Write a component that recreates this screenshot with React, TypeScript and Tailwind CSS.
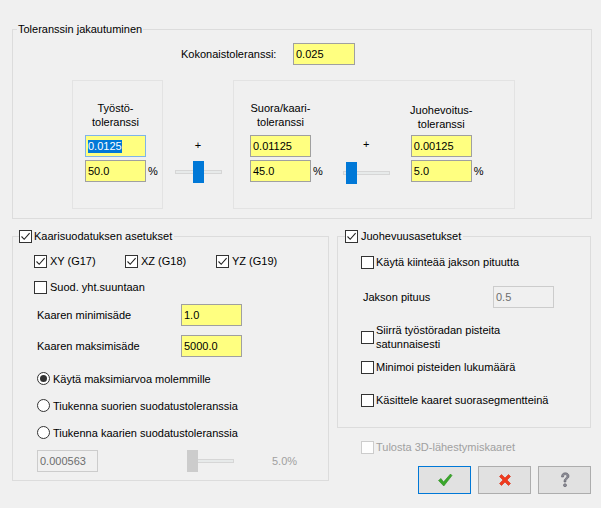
import React from "react";

function Field({ value, focused = false, disabled = false, w = "w-[61px]" }: { value: string; focused?: boolean; disabled?: boolean; w?: string }) {
  const base = "h-[22px] flex items-center pl-[2px] leading-[13px] shrink-0 " + w + " ";
  if (disabled) {
    return <div className={base + "border border-[#cccccc] bg-[#f0f0f0] text-[#6d6d6d]"}>{value}</div>;
  }
  if (focused) {
    return (
      <div className={base + "border border-[#7eb4ea] bg-[#ffff80]"}>
        <span className="bg-[#0078d7] text-white">{value}</span>
      </div>
    );
  }
  return <div className={base + "border border-[#a0a0a0] bg-[#ffff80] text-black"}>{value}</div>;
}

function Check({ checked = false, disabled = false }: { checked?: boolean; disabled?: boolean }) {
  return (
    <span
      className={
        "w-[13px] h-[13px] shrink-0 border flex items-center justify-center " +
        (disabled ? "border-[#cccccc] bg-[#fdfdfd]" : "border-[#333333] bg-white")
      }
    >
      {checked && (
        <svg width="11" height="11" viewBox="0 0 11 11">
          <path d="M1.5 5.5 L4.2 8.3 L9.6 2.2" fill="none" stroke="#222" strokeWidth="1.1" />
        </svg>
      )}
    </span>
  );
}

function Radio({ checked = false }: { checked?: boolean }) {
  return (
    <span className="w-[13px] h-[13px] shrink-0 rounded-full border border-[#333333] bg-white flex items-center justify-center">
      {checked && <span className="w-[7px] h-[7px] rounded-full bg-[#333333]" />}
    </span>
  );
}

function Slider({ thumbLeft, disabled = false }: { thumbLeft: number; disabled?: boolean }) {
  return (
    <div className="relative w-[47px] h-[22px] shrink-0">
      <div className="absolute left-0 right-0 top-[9px] h-[4px] bg-[#e7eaea] border border-[#d6d6d6]" />
      <div
        className={"absolute top-0 w-[11px] h-[22px] " + (disabled ? "bg-[#cccccc]" : "bg-[#0078d7]")}
        style={{ left: thumbLeft }}
      />
    </div>
  );
}

export default function App() {
  return (
    <div className="w-[601px] h-[508px] bg-[#f0f0f0] pt-[22px] pl-[12px] pr-[10px] text-[11px] leading-[14px] text-black font-['Liberation_Sans',Arial,sans-serif] overflow-hidden">
      {/* Toleranssin jakautuminen */}
      <fieldset className="w-[580px] h-[197px] shrink-0 border border-[#dcdcdc]">
        <legend className="ml-[4px] px-[1px] leading-[14px]">Toleranssin jakautuminen</legend>
        <div className="flex items-center mt-[7px]">
          <div className="ml-[168px] w-[112px]">Kokonaistoleranssi:</div>
          <Field value="0.025" w="w-[62px]" />
        </div>
        <div className="flex mt-[15px] ml-[59px]">
          {/* Box 1 */}
          <div className="w-[91px] h-[129px] border border-[#e3e3e3] flex flex-col pl-[12px]">
            <div className="h-[54px] w-[61px] pt-[20px] flex flex-col items-center whitespace-nowrap">
              <span>Työstö-</span>
              <span>toleranssi</span>
            </div>
            <Field value="0.0125" focused />
            <div className="flex items-center mt-[3px]">
              <Field value="50.0" />
              <span className="ml-[2px]">%</span>
            </div>
          </div>
          {/* Slider 1 */}
          <div className="w-[70px] flex flex-col items-center pt-[58px]">
            <span>+</span>
            <div className="mt-[9px]">
              <Slider thumbLeft={18} />
            </div>
          </div>
          {/* Box 2 */}
          <div className="w-[282px] h-[129px] border border-[#e3e3e3] flex pl-[16px]">
            <div className="flex flex-col">
              <div className="h-[54px] w-[61px] pt-[20px] flex flex-col items-center whitespace-nowrap">
                <span>Suora/kaari-</span>
                <span>toleranssi</span>
              </div>
              <Field value="0.01125" />
              <div className="flex items-center mt-[3px]">
                <Field value="45.0" />
                <span className="ml-[2px]">%</span>
              </div>
            </div>
            <div className="ml-[20px] w-[47px] flex flex-col items-center pt-[56px]">
              <span>+</span>
              <div className="mt-[11px]">
                <Slider thumbLeft={3} />
              </div>
            </div>
            <div className="ml-[21px] flex flex-col">
              <div className="h-[54px] w-[61px] pt-[22px] flex flex-col items-center whitespace-nowrap">
                <span>Juohevoitus-</span>
                <span>toleranssi</span>
              </div>
              <Field value="0.00125" />
              <div className="flex items-center mt-[3px]">
                <Field value="5.0" />
                <span className="ml-[2px]">%</span>
              </div>
            </div>
          </div>
        </div>
      </fieldset>

      <div className="flex mt-[10px]">
        {/* Kaarisuodatuksen asetukset */}
        <fieldset className="w-[317px] h-[252px] shrink-0 border border-[#dcdcdc]">
          <legend className="ml-[6px] pr-[2px]">
            <span className="flex items-center gap-[2px] h-[14px]">
              <Check checked />
              <span>Kaarisuodatuksen asetukset</span>
            </span>
          </legend>
          <div className="flex mt-[11px] pl-[21px]">
            <div className="w-[91px] flex items-center gap-[3px]">
              <Check checked />
              <span>XY (G17)</span>
            </div>
            <div className="w-[91px] flex items-center gap-[3px]">
              <Check checked />
              <span>XZ (G18)</span>
            </div>
            <div className="flex items-center gap-[3px]">
              <Check checked />
              <span>YZ (G19)</span>
            </div>
          </div>
          <div className="flex items-center gap-[3px] mt-[12px] pl-[21px]">
            <Check />
            <span>Suod. yht.suuntaan</span>
          </div>
          <div className="flex items-center mt-[10px] pl-[24px]">
            <span className="w-[144px]">Kaaren minimisäde</span>
            <Field value="1.0" />
          </div>
          <div className="flex items-center mt-[9px] pl-[24px]">
            <span className="w-[144px]">Kaaren maksimisäde</span>
            <Field value="5000.0" />
          </div>
          <div className="flex items-center gap-[3px] mt-[15px] pl-[24px] h-[13px]">
            <Radio checked />
            <span>Käytä maksimiarvoa molemmille</span>
          </div>
          <div className="flex items-center gap-[3px] mt-[14px] pl-[24px] h-[13px]">
            <Radio />
            <span>Tiukenna suorien suodatustoleranssia</span>
          </div>
          <div className="flex items-center gap-[3px] mt-[14px] pl-[24px] h-[13px]">
            <Radio />
            <span>Tiukenna kaarien suodatustoleranssia</span>
          </div>
          <div className="flex items-center mt-[11px] pl-[24px]">
            <Field value="0.000563" disabled />
            <div className="ml-[89px]">
              <Slider thumbLeft={0} disabled />
            </div>
            <span className="ml-[38px] text-[#a0a0a0]">5.0%</span>
          </div>
        </fieldset>

        <div className="ml-[8px] flex flex-col shrink-0">
          {/* Juohevuusasetukset */}
          <fieldset className="w-[254px] h-[199px] shrink-0 border border-[#dcdcdc]">
            <legend className="ml-[7px] pr-[2px]">
              <span className="flex items-center gap-[3px] h-[14px]">
                <Check checked />
                <span>Juohevuusasetukset</span>
              </span>
            </legend>
            <div className="flex items-center gap-[2px] mt-[12px] pl-[23px]">
              <Check />
              <span>Käytä kiinteää jakson pituutta</span>
            </div>
            <div className="flex items-center mt-[17px] pl-[25px]">
              <span className="w-[130px]">Jakson pituus</span>
              <Field value="0.5" disabled />
            </div>
            <div className="flex items-center gap-[2px] mt-[15px] pl-[23px]">
              <Check />
              <span>
                Siirrä työstöradan pisteita
                <br />
                satunnaisesti
              </span>
            </div>
            <div className="flex items-center gap-[2px] mt-[9px] pl-[23px]">
              <Check />
              <span>Minimoi pisteiden lukumäärä</span>
            </div>
            <div className="flex items-center gap-[2px] mt-[19px] pl-[23px]">
              <Check />
              <span>Käsittele kaaret suorasegmentteinä</span>
            </div>
          </fieldset>
          <div className="flex items-center gap-[2px] mt-[12px] pl-[24px]">
            <Check disabled />
            <span className="text-[#a0a0a0]">Tulosta 3D-lähestymiskaaret</span>
          </div>
          <div className="flex gap-[7px] mt-[12px] ml-[81px]">
            <button className="w-[53px] h-[28px] bg-[#e1e1e1] border border-[#0078d7] flex items-center justify-center">
              <svg width="16" height="16" viewBox="0 0 16 16">
                <path d="M1.5 8.5 L4 6.5 L6.5 10 L13.5 2 L15 3.5 L6.8 14 Z" fill="#3aa82b" stroke="#2a8a1e" strokeWidth="0.6" strokeLinejoin="round" />
              </svg>
            </button>
            <button className="w-[53px] h-[28px] bg-[#e1e1e1] border border-[#adadad] flex items-center justify-center">
              <svg width="16" height="16" viewBox="0 0 16 16">
                <path d="M2.5 4.5 L4.5 2.5 L8 6 L11.5 2.5 L13.5 4.5 L10 8 L13.5 11.5 L11.5 13.5 L8 10 L4.5 13.5 L2.5 11.5 L6 8 Z" fill="#f03a1e" stroke="#d42a10" strokeWidth="0.6" strokeLinejoin="round" />
              </svg>
            </button>
            <button className="w-[53px] h-[28px] bg-[#e1e1e1] border border-[#adadad] flex items-center justify-center">
              <svg width="16" height="18" viewBox="0 0 16 18">
                <path d="M4.5 6 C4.5 3 6.2 1.8 8.3 1.8 C10.6 1.8 12 3.2 12 5 C12 6.8 10.8 7.5 9.8 8.3 C9 9 8.9 9.6 8.9 11 L7 11 C7 9.3 7.3 8.4 8.3 7.5 C9.3 6.6 9.9 6.1 9.9 5.1 C9.9 4.1 9.2 3.6 8.2 3.6 C7.1 3.6 6.5 4.4 6.5 6 Z" fill="#8c8c96" stroke="#5d5d66" strokeWidth="0.6" />
                <circle cx="8" cy="14.2" r="1.5" fill="#8c8c96" stroke="#5d5d66" strokeWidth="0.6" />
              </svg>
            </button>
          </div>
        </div>
      </div>
    </div>
  );
}
